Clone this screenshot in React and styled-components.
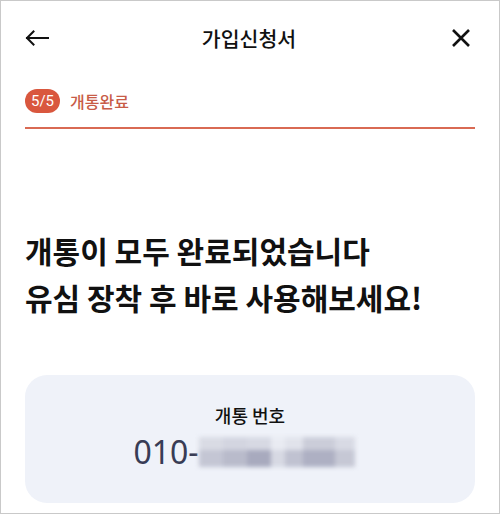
import React from "react";
import styled, { createGlobalStyle } from "styled-components";

const GlobalStyle = createGlobalStyle`
  html, body {
    margin: 0;
    padding: 0;
    background: #fff;
  }
  body {
    font-family: "Noto Sans CJK KR", "Noto Sans", sans-serif;
    color: #111;
  }
`;

const BackIcon = () => (
  <svg width="24" height="16" viewBox="0 0 24 16" fill="none">
    <path
      d="M23 8H2M8.5 1.5L2 8l6.5 6.5"
      stroke="#111"
      strokeWidth="2"
      strokeLinecap="square"
    />
  </svg>
);

const CloseIcon = () => (
  <svg width="20" height="20" viewBox="0 0 20 20" fill="none">
    <path d="M2 2l16 16M18 2L2 18" stroke="#111" strokeWidth="2.6" />
  </svg>
);

// blurred mosaic over the hidden phone digits
const maskBlocks = [
  { w: 24, c1: "#d9dbe4", c2: "#c4c6d4" },
  { w: 24, c1: "#d3d5e0", c2: "#b9bbcb" },
  { w: 24, c1: "#d7d9e3", c2: "#a8aabe" },
  { w: 14, c1: "#e9ebf2", c2: "#d7d9e3" },
  { w: 18, c1: "#e1e3eb", c2: "#c0c2d1" },
  { w: 32, c1: "#cbcdd9", c2: "#aeb0c3" },
  { w: 20, c1: "#d8dae4", c2: "#c6c8d5" },
];

class App extends React.Component {
  render() {
    return (
      <Screen>
        <GlobalStyle />
        <Header>
          <IconButton>
            <BackIcon />
          </IconButton>
          <Title>가입신청서</Title>
          <IconButton>
            <CloseIcon />
          </IconButton>
        </Header>

        <Step>
          <StepRow>
            <Badge>5/5</Badge>
            <StepLabel>개통완료</StepLabel>
          </StepRow>
          <StepLine />
        </Step>

        <Headline>
          개통이 모두 완료되었습니다
          <br />
          유심 장착 후 바로 사용해보세요!
        </Headline>

        <Card>
          <CardLabel>개통 번호</CardLabel>
          <Number>
            010-
            <Mask>
              {maskBlocks.map((b, i) => (
                <MaskBlock key={i} w={b.w} c1={b.c1} c2={b.c2} />
              ))}
            </Mask>
          </Number>
        </Card>
      </Screen>
    );
  }
}

const Screen = styled.div`
  width: 500px;
  height: 514px;
  box-sizing: border-box;
  border: 1px solid #c9c9c9;
  padding: 0 24px;
  overflow: hidden;
  display: flex;
  flex-direction: column;
`;

const Header = styled.div`
  height: 74px;
  display: flex;
  align-items: center;
  justify-content: space-between;
`;

const IconButton = styled.div`
  width: 24px;
  height: 24px;
  display: flex;
  align-items: center;
  justify-content: center;
  &:last-child {
    margin-right: 2px;
  }
`;

const Title = styled.div`
  font-size: 20.5px;
  font-weight: 500;
  color: #111;
`;

const Step = styled.div`
  padding-top: 14px;
`;

const StepRow = styled.div`
  display: flex;
  align-items: center;
  gap: 10px;
`;

const Badge = styled.div`
  height: 24px;
  padding: 0 6px;
  border-radius: 12px;
  background: #d9573e;
  color: #fff;
  font-family: "Roboto", "Noto Sans", sans-serif;
  font-size: 15px;
  line-height: 24px;
`;

const StepLabel = styled.div`
  font-size: 16px;
  font-weight: 500;
  color: #c85c47;
`;

const StepLine = styled.div`
  margin-top: 14px;
  height: 2px;
  background: #d96a53;
`;

const Headline = styled.h1`
  margin: 98px 0 0;
  font-size: 30px;
  font-weight: 700;
  line-height: 47px;
  color: #111;
`;

const Card = styled.div`
  margin-top: 54px;
  height: 128px;
  border-radius: 22px;
  background: #eff2f9;
  display: flex;
  flex-direction: column;
  align-items: center;
  padding-top: 27px;
  box-sizing: border-box;
`;

const CardLabel = styled.div`
  font-size: 18px;
  font-weight: 500;
  color: #111;
  line-height: 26px;
`;

const Number = styled.div`
  margin-top: 4px;
  display: flex;
  align-items: center;
  font-family: "Noto Sans", sans-serif;
  font-size: 32px;
  font-weight: 400;
  color: #383c55;
  line-height: 40px;
  padding-right: 12px;
`;

const Mask = styled.div`
  display: flex;
  height: 30px;
  filter: blur(2px);
`;

const MaskBlock = styled.div`
  width: ${p => p.w}px;
  height: 30px;
  background: linear-gradient(${p => p.c1} 0 45%, ${p => p.c2} 45% 100%);
`;

export default App;
